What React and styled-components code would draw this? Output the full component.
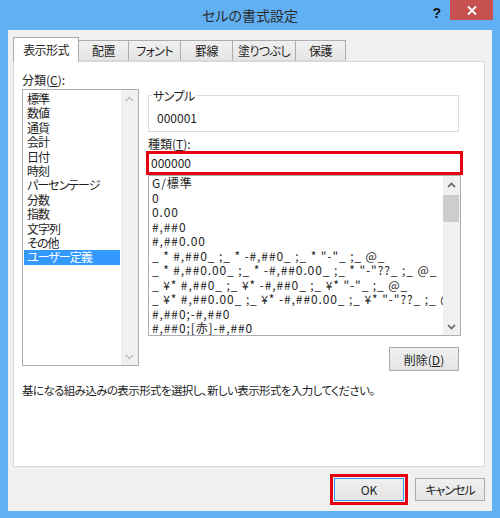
import styled, { createGlobalStyle } from "styled-components";

const GlobalStyle = createGlobalStyle`
  body {
    margin: 0;
    font-family: "Noto Sans CJK JP", "Noto Sans", sans-serif;
    font-size: 12px;
    color: #1e1e1e;
    font-feature-settings: "palt";
  }
`;

const Window = styled.div`
  width: 500px;
  height: 518px;
  background: #62b0f4;
  display: flex;
  flex-direction: column;
  overflow: hidden;
`;

const TitleBar = styled.div`
  height: 30px;
  display: grid;
  grid-template-columns: 1fr auto 1fr;
`;

const Title = styled.div`
  grid-column: 2;
  font-size: 14px;
  line-height: 30px;
  color: #2b2b2b;
`;

const Controls = styled.div`
  display: flex;
  justify-content: flex-end;
  align-items: flex-start;
`;

const Help = styled.span`
  font: bold 14px "Liberation Sans", sans-serif;
  line-height: 16px;
  margin: 5px 9px 0 0;
  color: #111;
`;

const Close = styled.div`
  width: 43px;
  height: 20px;
  margin-right: 7px;
  background: #c75050;
  display: flex;
  align-items: center;
  justify-content: center;
`;

const Body = styled.div`
  height: 481px;
  margin: 0 8px;
  box-sizing: border-box;
  background: #f0f0f0;
  padding: 7px 7px 0 5px;
  display: flex;
  flex-direction: column;
`;

const Tabs = styled.div`
  display: flex;
  align-items: flex-end;
  height: 24px;
`;

const Tab = styled.div`
  box-sizing: border-box;
  width: ${(p) => p.w}px;
  height: ${(p) => (p.active ? 25 : 21)}px;
  margin-left: ${(p) => (p.first ? 0 : -1)}px;
  margin-bottom: ${(p) => (p.active ? -1 : 0)}px;
  position: relative;
  z-index: ${(p) => (p.active ? 2 : 1)};
  border: 1px solid #acacac;
  border-bottom: ${(p) => (p.active ? "none" : "1px solid #d9d9d9")};
  background: ${(p) =>
    p.active ? "#fff" : "linear-gradient(#f0f0f0, #e5e5e5)"};
  display: flex;
  align-items: center;
  justify-content: center;
  font-size: 12px;
  letter-spacing: -0.6px;
  padding-bottom: ${(p) => (p.active ? 2 : 0)}px;
`;

const Panel = styled.div`
  box-sizing: border-box;
  width: 472px;
  height: 406px;
  background: #fff;
  border: 1px solid #d9d9d9;
  padding: 10px 0 0 8px;
`;

const Columns = styled.div`
  display: flex;
  gap: 9px;
`;

const LeftCol = styled.div`
  width: 117px;
`;

const RightCol = styled.div`
  width: 313px;
  padding-top: 16px;
`;

const Label = styled.div`
  line-height: 15px;
  margin-top: ${(p) => p.mt || 0}px;
  margin-bottom: ${(p) => p.mb || 0}px;
`;

const ListBox = styled.div`
  box-sizing: border-box;
  height: ${(p) => p.h}px;
  border: 1px solid #abadb3;
  display: flex;
  background: #fff;
`;

const Items = styled.div`
  flex: 1;
  padding: ${(p) => p.pad || 0}px 1px 0;
  overflow: hidden;
`;

const Item = styled.div`
  height: ${(p) => p.rh}px;
  line-height: ${(p) => p.rh}px;
  padding-left: ${(p) => p.pl}px;
  white-space: pre;
  letter-spacing: ${(p) => p.ls || 0}px;
  background: ${(p) => (p.selected ? "#3399ff" : "transparent")};
  color: ${(p) => (p.selected ? "#fff" : "#1e1e1e")};
`;

const ScrollCol = styled.div`
  width: 17px;
  flex-shrink: 0;
  background: #f0f0f0;
  display: flex;
  flex-direction: column;
  align-items: center;
`;

const Arrow = styled.div`
  height: 17px;
  width: 17px;
  display: flex;
  align-items: center;
  justify-content: center;
`;

const Track = styled.div`
  flex: 1;
  width: 100%;
  padding: 2px 1px 0 0;
  box-sizing: border-box;
`;

const Thumb = styled.div`
  height: 27px;
  background: #cdcdcd;
`;

const Sample = styled.fieldset`
  width: 311px;
  box-sizing: border-box;
  margin: 0;
  padding: 0 0 6px 8px;
  border: 1px solid #dcdcdc;
`;

const Legend = styled.legend`
  line-height: 15px;
  padding: 0 1px;
  margin-left: -5px;
  letter-spacing: -0.6px;
`;

const SampleValue = styled.div`
  line-height: 15px;
  margin-top: 7px;
`;

const FormatInput = styled.div`
  box-sizing: border-box;
  width: 317px;
  height: 24px;
  margin-left: -2px;
  border: 3px solid #e60012;
  padding-left: 2px;
  line-height: 18px;
  position: relative;
  z-index: 1;
`;

const ButtonRow = styled.div`
  display: flex;
  justify-content: flex-end;
  margin: 11px 2px 0 0;
`;

const Button = styled.div`
  box-sizing: border-box;
  width: ${(p) => p.w || 70}px;
  height: ${(p) => p.h || 23}px;
  border: 1px solid ${(p) => (p.primary ? "#3399ff" : "#acacac")};
  background: linear-gradient(#f0f0f0, #e5e5e5);
  display: flex;
  align-items: center;
  justify-content: center;
  font-size: 12px;
  letter-spacing: ${(p) => p.ls || 0}px;
`;

const Hint = styled.div`
  line-height: 15px;
  margin-top: 12px;
  font-size: 11.5px;
  letter-spacing: -0.6px;
`;

const Footer = styled.div`
  display: flex;
  justify-content: flex-end;
  align-items: center;
  gap: 7px;
  margin-top: 7px;
`;

const Highlight = styled.div`
  border: 3px solid #e60012;
  padding: 1px;
`;

const Chevron = ({ up, color }) => (
  <svg width="9" height="6" viewBox="0 0 9 6">
    <path
      d={up ? "M1 5 L4.5 1.5 L8 5" : "M1 1 L4.5 4.5 L8 1"}
      fill="none"
      stroke={color}
      strokeWidth="1.6"
    />
  </svg>
);

const categories = [
  "標準",
  "数値",
  "通貨",
  "会計",
  "日付",
  "時刻",
  "パーセンテージ",
  "分数",
  "指数",
  "文字列",
  "その他",
  "ユーザー定義",
];

const formats = [
  "G/標準",
  "0",
  "0.00",
  "#,##0",
  "#,##0.00",
  '_ * #,##0_ ;_ * -#,##0_ ;_ * "-"_ ;_ @_',
  '_ * #,##0.00_ ;_ * -#,##0.00_ ;_ * "-"??_ ;_ @_',
  '_ ¥* #,##0_ ;_ ¥* -#,##0_ ;_ ¥* "-"_ ;_ @_',
  '_ ¥* #,##0.00_ ;_ ¥* -#,##0.00_ ;_ ¥* "-"??_ ;_ @_',
  "#,##0;-#,##0",
  "#,##0;[赤]-#,##0",
];

const tabs = [
  ["表示形式", 66],
  ["配置", 51],
  ["フォント", 53],
  ["罫線", 53],
  ["塗りつぶし", 64],
  ["保護", 51],
];

function App() {
  return (
    <Window>
      <GlobalStyle />
      <TitleBar>
        <Title>セルの書式設定</Title>
        <Controls>
          <Help>?</Help>
          <Close>
            <svg width="10" height="9" viewBox="0 0 10 9">
              <path d="M1 0.5 L9 8.5 M9 0.5 L1 8.5" stroke="#fff" strokeWidth="2" />
            </svg>
          </Close>
        </Controls>
      </TitleBar>
      <Body>
        <Tabs>
          {tabs.map(([name, w], i) => (
            <Tab key={name} w={w} first={i === 0} active={i === 0}>
              {name}
            </Tab>
          ))}
        </Tabs>
        <Panel>
          <Columns>
            <LeftCol>
              <Label mb={2}>
                分類(<u>C</u>):
              </Label>
              <ListBox h={277}>
                <Items pad={2}>
                  {categories.map((c, i) => (
                    <Item key={c} rh={14.4} pl={3} ls={-1} selected={i === 11}>
                      {c}
                    </Item>
                  ))}
                </Items>
                <ScrollCol>
                  <Arrow>
                    <Chevron up color="#c2c2c2" />
                  </Arrow>
                  <Track />
                  <Arrow>
                    <Chevron color="#c2c2c2" />
                  </Arrow>
                </ScrollCol>
              </ListBox>
            </LeftCol>
            <RightCol>
              <Sample>
                <Legend>サンプル</Legend>
                <SampleValue>000001</SampleValue>
              </Sample>
              <Label mt={4}>
                種類(<u>T</u>):
              </Label>
              <FormatInput>000000</FormatInput>
              <ListBox h={161}>
                <Items>
                  {formats.map((f) => (
                    <Item key={f} rh={14.5} pl={2} ls={0.9}>
                      {f}
                    </Item>
                  ))}
                </Items>
                <ScrollCol>
                  <Arrow>
                    <Chevron up color="#606060" />
                  </Arrow>
                  <Track>
                    <Thumb />
                  </Track>
                  <Arrow>
                    <Chevron color="#606060" />
                  </Arrow>
                </ScrollCol>
              </ListBox>
              <ButtonRow>
                <Button h={24}>
                  削除(<u>D</u>)
                </Button>
              </ButtonRow>
            </RightCol>
          </Columns>
          <Hint>
            基になる組み込みの表示形式を選択し、新しい表示形式を入力してください。
          </Hint>
        </Panel>
        <Footer>
          <Highlight>
            <Button primary>OK</Button>
          </Highlight>
          <Button ls={-1}>キャンセル</Button>
        </Footer>
      </Body>
    </Window>
  );
}

export default App;
